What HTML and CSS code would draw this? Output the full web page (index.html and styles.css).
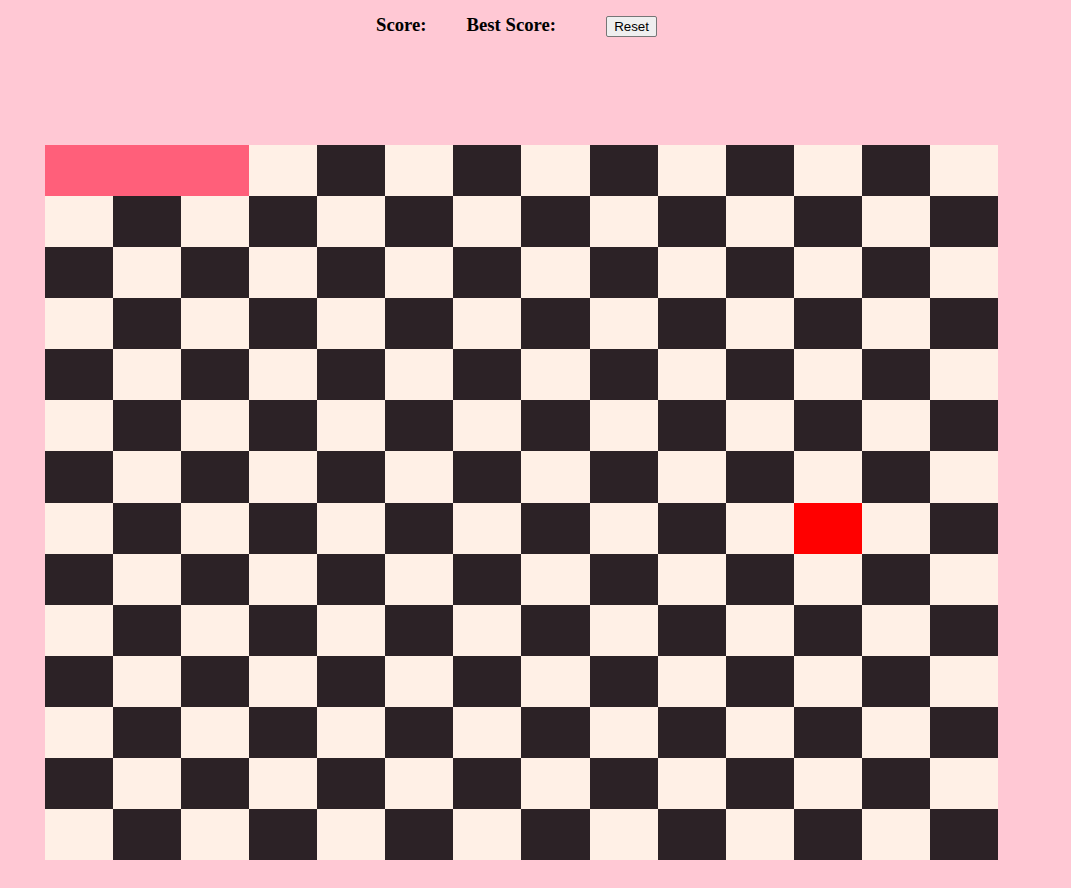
FILE: index.html
```html
<!DOCTYPE html>
<html>
<head>
<meta charset="utf-8">
<link rel="stylesheet" href="styles.css">
</head>
<body>
<div class="top">
  <h3 class="label score">Score: <span></span></h3>
  <h3 class="label best">Best Score: <span></span></h3>
  <button class="reset">Reset</button>
</div>
<div class="board">
  <div class="s"></div><div class="l"></div><div class="d"></div><div class="l"></div><div class="d"></div><div class="l"></div><div class="d"></div><div class="l"></div><div class="d"></div><div class="l"></div><div class="d"></div><div class="l"></div>
  <div class="l"></div><div class="d"></div><div class="l"></div><div class="d"></div><div class="l"></div><div class="d"></div><div class="l"></div><div class="d"></div><div class="l"></div><div class="d"></div><div class="l"></div><div class="d"></div><div class="l"></div><div class="d"></div>
  <div class="d"></div><div class="l"></div><div class="d"></div><div class="l"></div><div class="d"></div><div class="l"></div><div class="d"></div><div class="l"></div><div class="d"></div><div class="l"></div><div class="d"></div><div class="l"></div><div class="d"></div><div class="l"></div>
  <div class="l"></div><div class="d"></div><div class="l"></div><div class="d"></div><div class="l"></div><div class="d"></div><div class="l"></div><div class="d"></div><div class="l"></div><div class="d"></div><div class="l"></div><div class="d"></div><div class="l"></div><div class="d"></div>
  <div class="d"></div><div class="l"></div><div class="d"></div><div class="l"></div><div class="d"></div><div class="l"></div><div class="d"></div><div class="l"></div><div class="d"></div><div class="l"></div><div class="d"></div><div class="l"></div><div class="d"></div><div class="l"></div>
  <div class="l"></div><div class="d"></div><div class="l"></div><div class="d"></div><div class="l"></div><div class="d"></div><div class="l"></div><div class="d"></div><div class="l"></div><div class="d"></div><div class="l"></div><div class="d"></div><div class="l"></div><div class="d"></div>
  <div class="d"></div><div class="l"></div><div class="d"></div><div class="l"></div><div class="d"></div><div class="l"></div><div class="d"></div><div class="l"></div><div class="d"></div><div class="l"></div><div class="d"></div><div class="l"></div><div class="d"></div><div class="l"></div>
  <div class="l"></div><div class="d"></div><div class="l"></div><div class="d"></div><div class="l"></div><div class="d"></div><div class="l"></div><div class="d"></div><div class="l"></div><div class="d"></div><div class="l"></div><div class="f"></div><div class="l"></div><div class="d"></div>
  <div class="d"></div><div class="l"></div><div class="d"></div><div class="l"></div><div class="d"></div><div class="l"></div><div class="d"></div><div class="l"></div><div class="d"></div><div class="l"></div><div class="d"></div><div class="l"></div><div class="d"></div><div class="l"></div>
  <div class="l"></div><div class="d"></div><div class="l"></div><div class="d"></div><div class="l"></div><div class="d"></div><div class="l"></div><div class="d"></div><div class="l"></div><div class="d"></div><div class="l"></div><div class="d"></div><div class="l"></div><div class="d"></div>
  <div class="d"></div><div class="l"></div><div class="d"></div><div class="l"></div><div class="d"></div><div class="l"></div><div class="d"></div><div class="l"></div><div class="d"></div><div class="l"></div><div class="d"></div><div class="l"></div><div class="d"></div><div class="l"></div>
  <div class="l"></div><div class="d"></div><div class="l"></div><div class="d"></div><div class="l"></div><div class="d"></div><div class="l"></div><div class="d"></div><div class="l"></div><div class="d"></div><div class="l"></div><div class="d"></div><div class="l"></div><div class="d"></div>
  <div class="d"></div><div class="l"></div><div class="d"></div><div class="l"></div><div class="d"></div><div class="l"></div><div class="d"></div><div class="l"></div><div class="d"></div><div class="l"></div><div class="d"></div><div class="l"></div><div class="d"></div><div class="l"></div>
  <div class="l"></div><div class="d"></div><div class="l"></div><div class="d"></div><div class="l"></div><div class="d"></div><div class="l"></div><div class="d"></div><div class="l"></div><div class="d"></div><div class="l"></div><div class="d"></div><div class="l"></div><div class="d"></div>
</div>
</body>
</html>
```
FILE: styles.css
```css
html, body {
  margin: 0;
  padding: 0;
  background: #ffc8d4;
}
body {
  font-family: "Liberation Serif", "Times New Roman", serif;
  color: #000;
}
.top {
  display: flex;
  align-items: baseline;
  padding: 14px 0 0 376px;
  height: 24px;
}
.label {
  margin: 0;
  font-size: 18.72px;
  font-weight: bold;
  line-height: 22px;
}
.score {
  margin-right: 40px;
}
.best {
  margin-right: 50px;
}
.reset {
  font-family: "Liberation Sans", Arial, sans-serif;
  font-size: 13.33px;
  width: 51px;
  height: 21px;
  padding: 0 6px;
  background: #efefef;
  border: 1px solid #767676;
  border-radius: 2px;
  color: #000;
}
.board {
  display: grid;
  grid-template-columns: repeat(14, 1fr);
  grid-template-rows: repeat(14, 1fr);
  width: 953px;
  height: 715px;
  margin: 107px 0 0 45px;
}
.d { background: #2c2226; }
.l { background: #fff0e6; }
.s { background: #ff5f7a; grid-column: span 3; }
.f { background: #ff0000; }
```
